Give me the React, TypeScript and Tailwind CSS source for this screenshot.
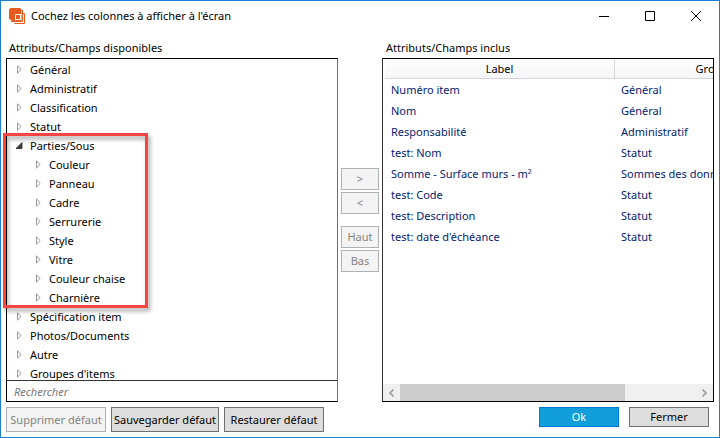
import type { JSX, ReactNode } from 'react'
import clsx from 'clsx'

interface TreeItem {
  label: string
  children?: string[]
}

const AVAILABLE: TreeItem[] = [
  { label: 'Général' },
  { label: 'Administratif' },
  { label: 'Classification' },
  { label: 'Statut' },
  {
    label: 'Parties/Sous',
    children: ['Couleur', 'Panneau', 'Cadre', 'Serrurerie', 'Style', 'Vitre', 'Couleur chaise', 'Charnière'],
  },
  { label: 'Spécification item' },
  { label: 'Photos/Documents' },
  { label: 'Autre' },
  { label: "Groupes d'items" },
]

const INCLUDED = [
  { label: 'Numéro item', group: 'Général' },
  { label: 'Nom', group: 'Général' },
  { label: 'Responsabilité', group: 'Administratif' },
  { label: 'test: Nom', group: 'Statut' },
  { label: 'Somme - Surface murs - m²', group: 'Sommes des données' },
  { label: 'test: Code', group: 'Statut' },
  { label: 'test: Description', group: 'Statut' },
  { label: "test: date d'échéance", group: 'Statut' },
]

function AppIcon(): JSX.Element {
  return (
    <svg width="17" height="17" viewBox="0 0 17 17" fill="none" aria-hidden="true">
      <path d="M1.5 0H11L12.5 1.5V13H3L0 10.5V1.5Z" fill="#e8591c" />
      <path d="M6.5 12.5V6.5H12.5M11.5 6.5V11.5H6.5" stroke="#fff" />
      <path d="M13 5.5H15.5V15.5H5.5M13.5 2V13.5H2" stroke="#e8591c" />
    </svg>
  )
}

function Expander({ open }: { open?: boolean }): JSX.Element {
  return (
    <svg width="7" height="9" viewBox="0 0 7 9" className="shrink-0" aria-hidden="true">
      {open ? (
        <path d="M6 1.5V7.5H0Z" fill="#404040" stroke="#262626" strokeWidth=".8" />
      ) : (
        <path d="M1.5 .9V8.1L5.2 4.5Z" fill="#fff" stroke="#999" />
      )}
    </svg>
  )
}

function TreeRow({ label, open, nested }: { label: string; open?: boolean; nested?: boolean }): JSX.Element {
  return (
    <div className={clsx('flex h-[19px] items-center gap-[7px] whitespace-nowrap', nested ? 'pl-7' : 'pl-[9px]')}>
      <Expander open={open} />
      <span>{label}</span>
    </div>
  )
}

interface DialogButtonProps {
  children: ReactNode
  className?: string
  disabled?: boolean
  primary?: boolean
}

function DialogButton({ children, className, disabled, primary }: DialogButtonProps): JSX.Element {
  return (
    <button
      type="button"
      disabled={disabled}
      className={clsx(
        'flex shrink-0 items-center justify-center border whitespace-nowrap',
        disabled && 'border-[#adb2b5] bg-[#f4f4f4] text-[#838383]',
        primary && 'border-[#0078d7] bg-[#119eda] text-white',
        !disabled && !primary && 'border-[#707070] bg-[#dddddd]',
        className,
      )}
    >
      {children}
    </button>
  )
}

function TitleBar(): JSX.Element {
  return (
    <header className="flex h-[30px] shrink-0 items-center pl-2">
      <AppIcon />
      <h1 className="ml-[5px] flex-1 whitespace-nowrap">Cochez les colonnes à afficher à l'écran</h1>
      <button type="button" aria-label="Réduire" className="flex h-full w-[46px] items-center justify-center">
        <svg width="10" height="10" viewBox="0 0 10 10" stroke="#000">
          <path d="M0 5.5H10" />
        </svg>
      </button>
      <button type="button" aria-label="Agrandir" className="flex h-full w-[46px] items-center justify-center">
        <svg width="10" height="10" viewBox="0 0 10 10" fill="none" stroke="#000">
          <path d="M.5 .5H9.5V9.5H.5Z" />
        </svg>
      </button>
      <button type="button" aria-label="Fermer la fenêtre" className="flex h-full w-[46px] items-center justify-center">
        <svg width="10" height="10" viewBox="0 0 10 10" stroke="#000">
          <path d="M0 0L10 10M10 0L0 10" />
        </svg>
      </button>
    </header>
  )
}

function AvailablePanel(): JSX.Element {
  return (
    <section className="flex min-w-0 flex-1 flex-col">
      <h2 className="ml-[3px] h-[27px] pt-[9px] leading-4">Attributs/Champs disponibles</h2>
      <div className="relative flex min-h-0 flex-1 flex-col border border-black border-r-[#707070]">
        <div className="min-h-0 flex-1 overflow-hidden pt-px">
          {AVAILABLE.map((item) => (
            <div key={item.label}>
              <TreeRow label={item.label} open={!!item.children} />
              {item.children?.map((child) => (
                <TreeRow key={child} label={child} nested />
              ))}
            </div>
          ))}
        </div>
        <input
          type="text"
          aria-label="Rechercher"
          placeholder="Rechercher"
          className="h-[21px] w-full shrink-0 border-t border-[#333] px-[7px] italic outline-none placeholder:text-[#777]"
        />
        <div className="pointer-events-none absolute top-[74px] -left-1 h-[175px] w-[145px] border-3 border-[#fa4343] drop-shadow-[2px_3px_2px_rgba(0,0,0,0.4)]" />
      </div>
    </section>
  )
}

function IncludedPanel(): JSX.Element {
  return (
    <section className="flex min-w-0 flex-1 flex-col">
      <h2 className="ml-1 h-[27px] pt-[9px] leading-4">Attributs/Champs inclus</h2>
      <div className="flex min-h-0 flex-1 flex-col border border-black border-l-[#333]">
        <div className="min-h-0 flex-1 overflow-hidden pl-[2px]">
          <table className="w-[430px] table-fixed border-separate border-spacing-0 whitespace-nowrap">
            <thead>
              <tr className="h-5 bg-linear-to-b from-white to-[#f5f6f8]">
                <th className="w-[230px] border-r border-b border-[#d5d5d5] p-0 font-normal">Label</th>
                <th className="border-b border-[#d5d5d5] p-0 font-normal">Groupe</th>
              </tr>
            </thead>
            <tbody className="text-[#042271]">
              {INCLUDED.map((row) => (
                <tr key={row.label} className="h-[21px]">
                  <td className="p-0 pl-[6px]">{row.label}</td>
                  <td className="p-0 pl-[6px]">{row.group}</td>
                </tr>
              ))}
            </tbody>
          </table>
        </div>
        <div className="flex h-[17px] shrink-0 bg-[#f0f0f0]">
          <button type="button" aria-label="Défiler à gauche" className="flex w-[17px] items-center justify-center">
            <svg width="5" height="8" viewBox="0 0 5 8" fill="none" stroke="#a0a0a0" strokeWidth="1.6">
              <path d="M4.5 .5L1 4L4.5 7.5" />
            </svg>
          </button>
          <div className="flex-1">
            <div className="h-full w-[76%] bg-[#cdcdcd]" />
          </div>
          <button type="button" aria-label="Défiler à droite" className="flex w-[17px] items-center justify-center">
            <svg width="5" height="8" viewBox="0 0 5 8" fill="none" stroke="#a0a0a0" strokeWidth="1.6">
              <path d="M.5 .5L4 4L.5 7.5" />
            </svg>
          </button>
        </div>
      </div>
    </section>
  )
}

export default function App(): JSX.Element {
  return (
    <div className="flex h-screen flex-col border border-[#1c7fd2] bg-white font-['Noto_Sans','Open_Sans',sans-serif] text-[11px] leading-4 text-black">
      <TitleBar />
      <main className="flex min-h-0 flex-1 px-[5px]">
        <AvailablePanel />
        <div className="flex w-11 shrink-0 flex-col items-center gap-[2px] pt-[137px]">
          <DialogButton disabled className="h-[22px] w-[38px]">&gt;</DialogButton>
          <DialogButton disabled className="h-[22px] w-[38px]">&lt;</DialogButton>
          <DialogButton disabled className="mt-[10px] h-[22px] w-[38px]">Haut</DialogButton>
          <DialogButton disabled className="h-[22px] w-[38px]">Bas</DialogButton>
        </div>
        <IncludedPanel />
      </main>
      <footer className="flex items-start gap-[5px] px-[5px] pt-[5px] pb-[5px]">
        <DialogButton disabled className="h-[25px] w-[100px]">Supprimer défaut</DialogButton>
        <DialogButton className="h-[25px] w-[108px]">Sauvegarder défaut</DialogButton>
        <DialogButton className="h-[25px] w-[100px]">Restaurer défaut</DialogButton>
        <div className="mr-[5px] ml-auto flex gap-[10px]">
          <DialogButton primary className="h-5 w-20">Ok</DialogButton>
          <DialogButton className="h-5 w-20">Fermer</DialogButton>
        </div>
      </footer>
    </div>
  )
}
